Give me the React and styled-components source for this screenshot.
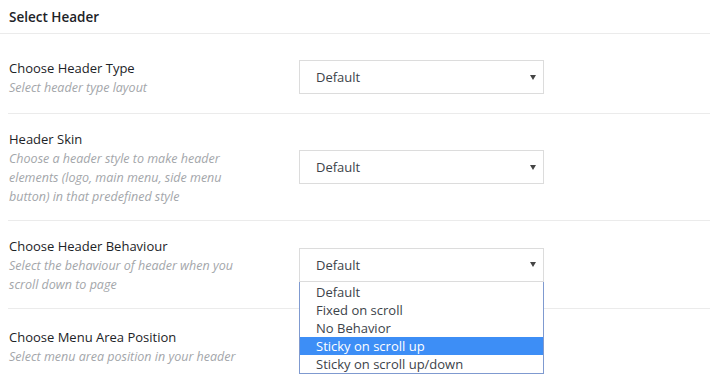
import React from "react";
import styled, { createGlobalStyle } from "styled-components";

const Global = createGlobalStyle`
  html, body { margin: 0; padding: 0; background: #fff; }
  body { font-family: "Open Sans", "Noto Sans", sans-serif; color: #23282d; }
`;

const Page = styled.div`
  width: 710px;
  height: 378px;
  overflow: hidden;
`;

const TitleBar = styled.div`
  height: 33px;
  display: flex;
  align-items: center;
  padding: 0 9px;
  border-bottom: 1px solid #ebebeb;
  font-size: 13.5px;
  font-weight: 600;
  color: #1d2327;
`;

const Rows = styled.div`
  margin-left: 8px;
`;

const Row = styled.div`
  display: flex;
  align-items: center;
  padding: ${(p) => p.$pad};
  border-bottom: ${(p) => (p.$last ? "none" : "1px solid #ebebeb")};
`;

const LabelCol = styled.div`
  width: 291px;
  flex: none;
  padding-left: 1px;
  box-sizing: border-box;
`;

const Label = styled.div`
  font-size: 13px;
  line-height: 19px;
  color: #1d2327;
`;

const Desc = styled.div`
  font-size: 12.5px;
  line-height: 19px;
  font-style: italic;
  color: #a3a6aa;
  max-width: 250px;
`;

const SelectWrap = styled.div`
  position: relative;
  width: 245px;
  margin-bottom: 2px;
`;

const SelectBox = styled.div`
  height: 34px;
  box-sizing: border-box;
  border: 1px solid #dcdcdc;
  display: flex;
  align-items: center;
  justify-content: space-between;
  padding: 0 7px 0 16px;
  font-size: 13px;
  color: #3c434a;
  background: #fff;
`;

const Arrow = styled.span`
  width: 0;
  height: 0;
  border-left: 3px solid transparent;
  border-right: 3px solid transparent;
  border-top: 5px solid #444;
`;

const List = styled.ul`
  position: absolute;
  left: 0;
  top: 34px;
  width: 245px;
  box-sizing: border-box;
  margin: 0;
  padding: 1px 0 0;
  list-style: none;
  border: 1px solid #7f9ad0;
  border-top: none;
  background: #fff;
  z-index: 2;
`;

const Option = styled.li`
  height: 18px;
  line-height: 18px;
  padding-left: 16px;
  font-size: 13px;
  color: ${(p) => (p.$active ? "#fff" : "#3c434a")};
  background: ${(p) => (p.$active ? "#3d8ef6" : "transparent")};
`;

const Select = ({ value, options, active }) => (
  <SelectWrap>
    <SelectBox>
      <span>{value}</span>
      <Arrow />
    </SelectBox>
    {options && (
      <List>
        {options.map((o) => (
          <Option key={o} $active={o === active}>
            {o}
          </Option>
        ))}
      </List>
    )}
  </SelectWrap>
);

const rows = [
  { label: "Choose Header Type", desc: "Select header type layout", pad: "25px 0 16px" },
  {
    label: "Header Skin",
    desc: "Choose a header style to make header elements (logo, main menu, side menu button) in that predefined style",
    pad: "16px 0 14px",
  },
  {
    label: "Choose Header Behaviour",
    desc: "Select the behaviour of header when you scroll down to page",
    options: ["Default", "Fixed on scroll", "No Behavior", "Sticky on scroll up", "Sticky on scroll up/down"],
    active: "Sticky on scroll up",
    pad: "16px 0 14px",
  },
  {
    label: "Choose Menu Area Position",
    desc: "Select menu area position in your header",
    noSelect: true,
    pad: "19px 0 14px",
  },
];

export default function App() {
  return (
    <Page>
      <Global />
      <TitleBar>Select Header</TitleBar>
      <Rows>
        {rows.map((r, i) => (
          <Row key={r.label} $pad={r.pad} $last={i === rows.length - 1}>
            <LabelCol>
              <Label>{r.label}</Label>
              <Desc>{r.desc}</Desc>
            </LabelCol>
            {!r.noSelect && <Select value="Default" options={r.options} active={r.active} />}
          </Row>
        ))}
      </Rows>
    </Page>
  );
}
